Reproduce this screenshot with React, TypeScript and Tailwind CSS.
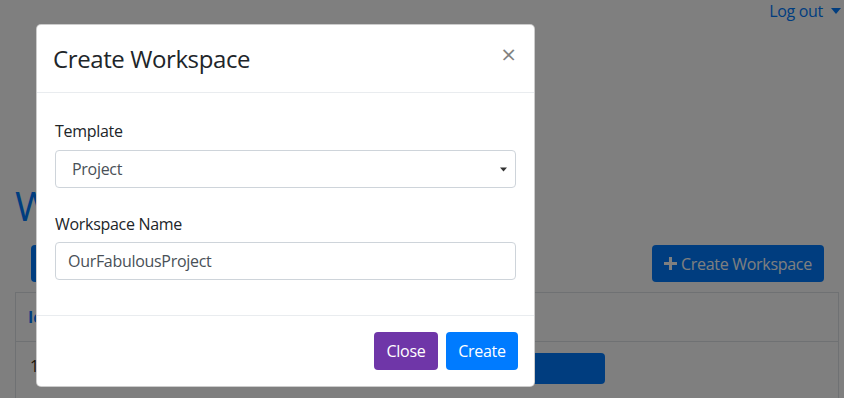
import React from 'react';

const font = "font-['Open_Sans','Liberation_Sans',sans-serif]";

const Caret: React.FC<{ className?: string }> = ({ className }) => (
    <svg viewBox="0 0 10 6" className={className} fill="currentColor">
        <path d="M0 0h10L5 6z" />
    </svg>
);

const App: React.FC = () => {
    return (
        <div className={`relative h-[398px] w-[844px] overflow-hidden bg-white text-[#212529] ${font}`}>
            {/* Page underneath */}
            <div className="flex h-[22px] items-center justify-end pr-[3px]">
                <span className="flex items-center gap-[8px] text-[16px] tracking-[-0.3px] text-[#007bff]">
                    Log out
                    <Caret className="h-[6px] w-[10px]" />
                </span>
            </div>

            <div className="pl-[15px] pr-[5px]">
                <h1 className="mt-[160px] text-[40px] font-medium leading-[48px] text-[#007bff]">W</h1>

                <div className="mt-[15px] flex items-center justify-between pl-[16px] pr-[15px]">
                    <span className="h-[37px] w-[150px] rounded-[4px] bg-[#007bff]" />
                    <button className="flex h-[37px] w-[172px] items-center justify-center gap-[4px] rounded-[4px] bg-[#007bff] text-[16px] tracking-[-0.3px] text-white">
                        <svg viewBox="0 0 12 12" className="h-[13px] w-[13px]" fill="currentColor">
                            <path d="M4.6 0h2.8v4.6H12v2.8H7.4V12H4.6V7.4H0V4.6h4.6z" />
                        </svg>
                        Create Workspace
                    </button>
                </div>

                <div className="mt-[10px] border border-[#dee2e6]">
                    <div className="flex h-[49px] items-center border-b border-[#dee2e6] px-[12px] text-[16px] font-bold text-[#007bff]">
                        Id
                    </div>
                    <div className="flex h-[56px] items-start pt-[11px]">
                        <span className="w-[400px] px-[14px] pt-[1px] text-[16px] leading-[24px] text-[#3a2a10]">1</span>
                        <span className="ml-[29px] h-[31px] w-[160px] rounded-[4px] bg-[#007bff]" />
                    </div>
                </div>
            </div>

            {/* Backdrop */}
            <div className="absolute inset-0 bg-black/50" />

            {/* Modal */}
            <div className="absolute left-[36px] top-[24px] w-[499px] rounded-[5px] border border-black/20 bg-white">
                <div className="flex h-[68px] items-center justify-between border-b border-[#e9ecef] pl-[16px] pr-[18px]">
                    <h5 className="text-[24px] font-medium leading-[36px] tracking-[-0.4px]">Create Workspace</h5>
                    <span className="-mt-[9px] text-[26px] font-normal leading-none text-black/50">×</span>
                </div>

                <div className="px-[18px] pb-[35px] pt-[26px]">
                    <label className="mb-[7px] block text-[16px] leading-[24px] tracking-[-0.3px]">Template</label>
                    <div className="flex h-[38px] items-center justify-between rounded-[4px] border border-[#ced4da] pl-[16px] pr-[8px] text-[16px] tracking-[-0.3px] text-[#495057]">
                        Project
                        <Caret className="h-[5px] w-[7px] text-[#333]" />
                    </div>

                    <label className="mb-[6px] mt-[24px] block text-[16px] leading-[24px] tracking-[-0.3px]">Workspace Name</label>
                    <div className="flex h-[38px] items-center rounded-[4px] border border-[#ced4da] px-[12px] text-[16px] tracking-[-0.3px] text-[#495057]">
                        OurFabulousProject
                    </div>
                </div>

                <div className="flex justify-end gap-[8px] border-t border-[#e9ecef] px-[16px] py-[16px]">
                    <button className="h-[38px] w-[64px] rounded-[4px] bg-[#6f36a8] text-[16px] tracking-[-0.3px] text-white">Close</button>
                    <button className="h-[38px] w-[72px] rounded-[4px] bg-[#007bff] text-[16px] tracking-[-0.3px] text-white">Create</button>
                </div>
            </div>
        </div>
    );
};

export default App;
